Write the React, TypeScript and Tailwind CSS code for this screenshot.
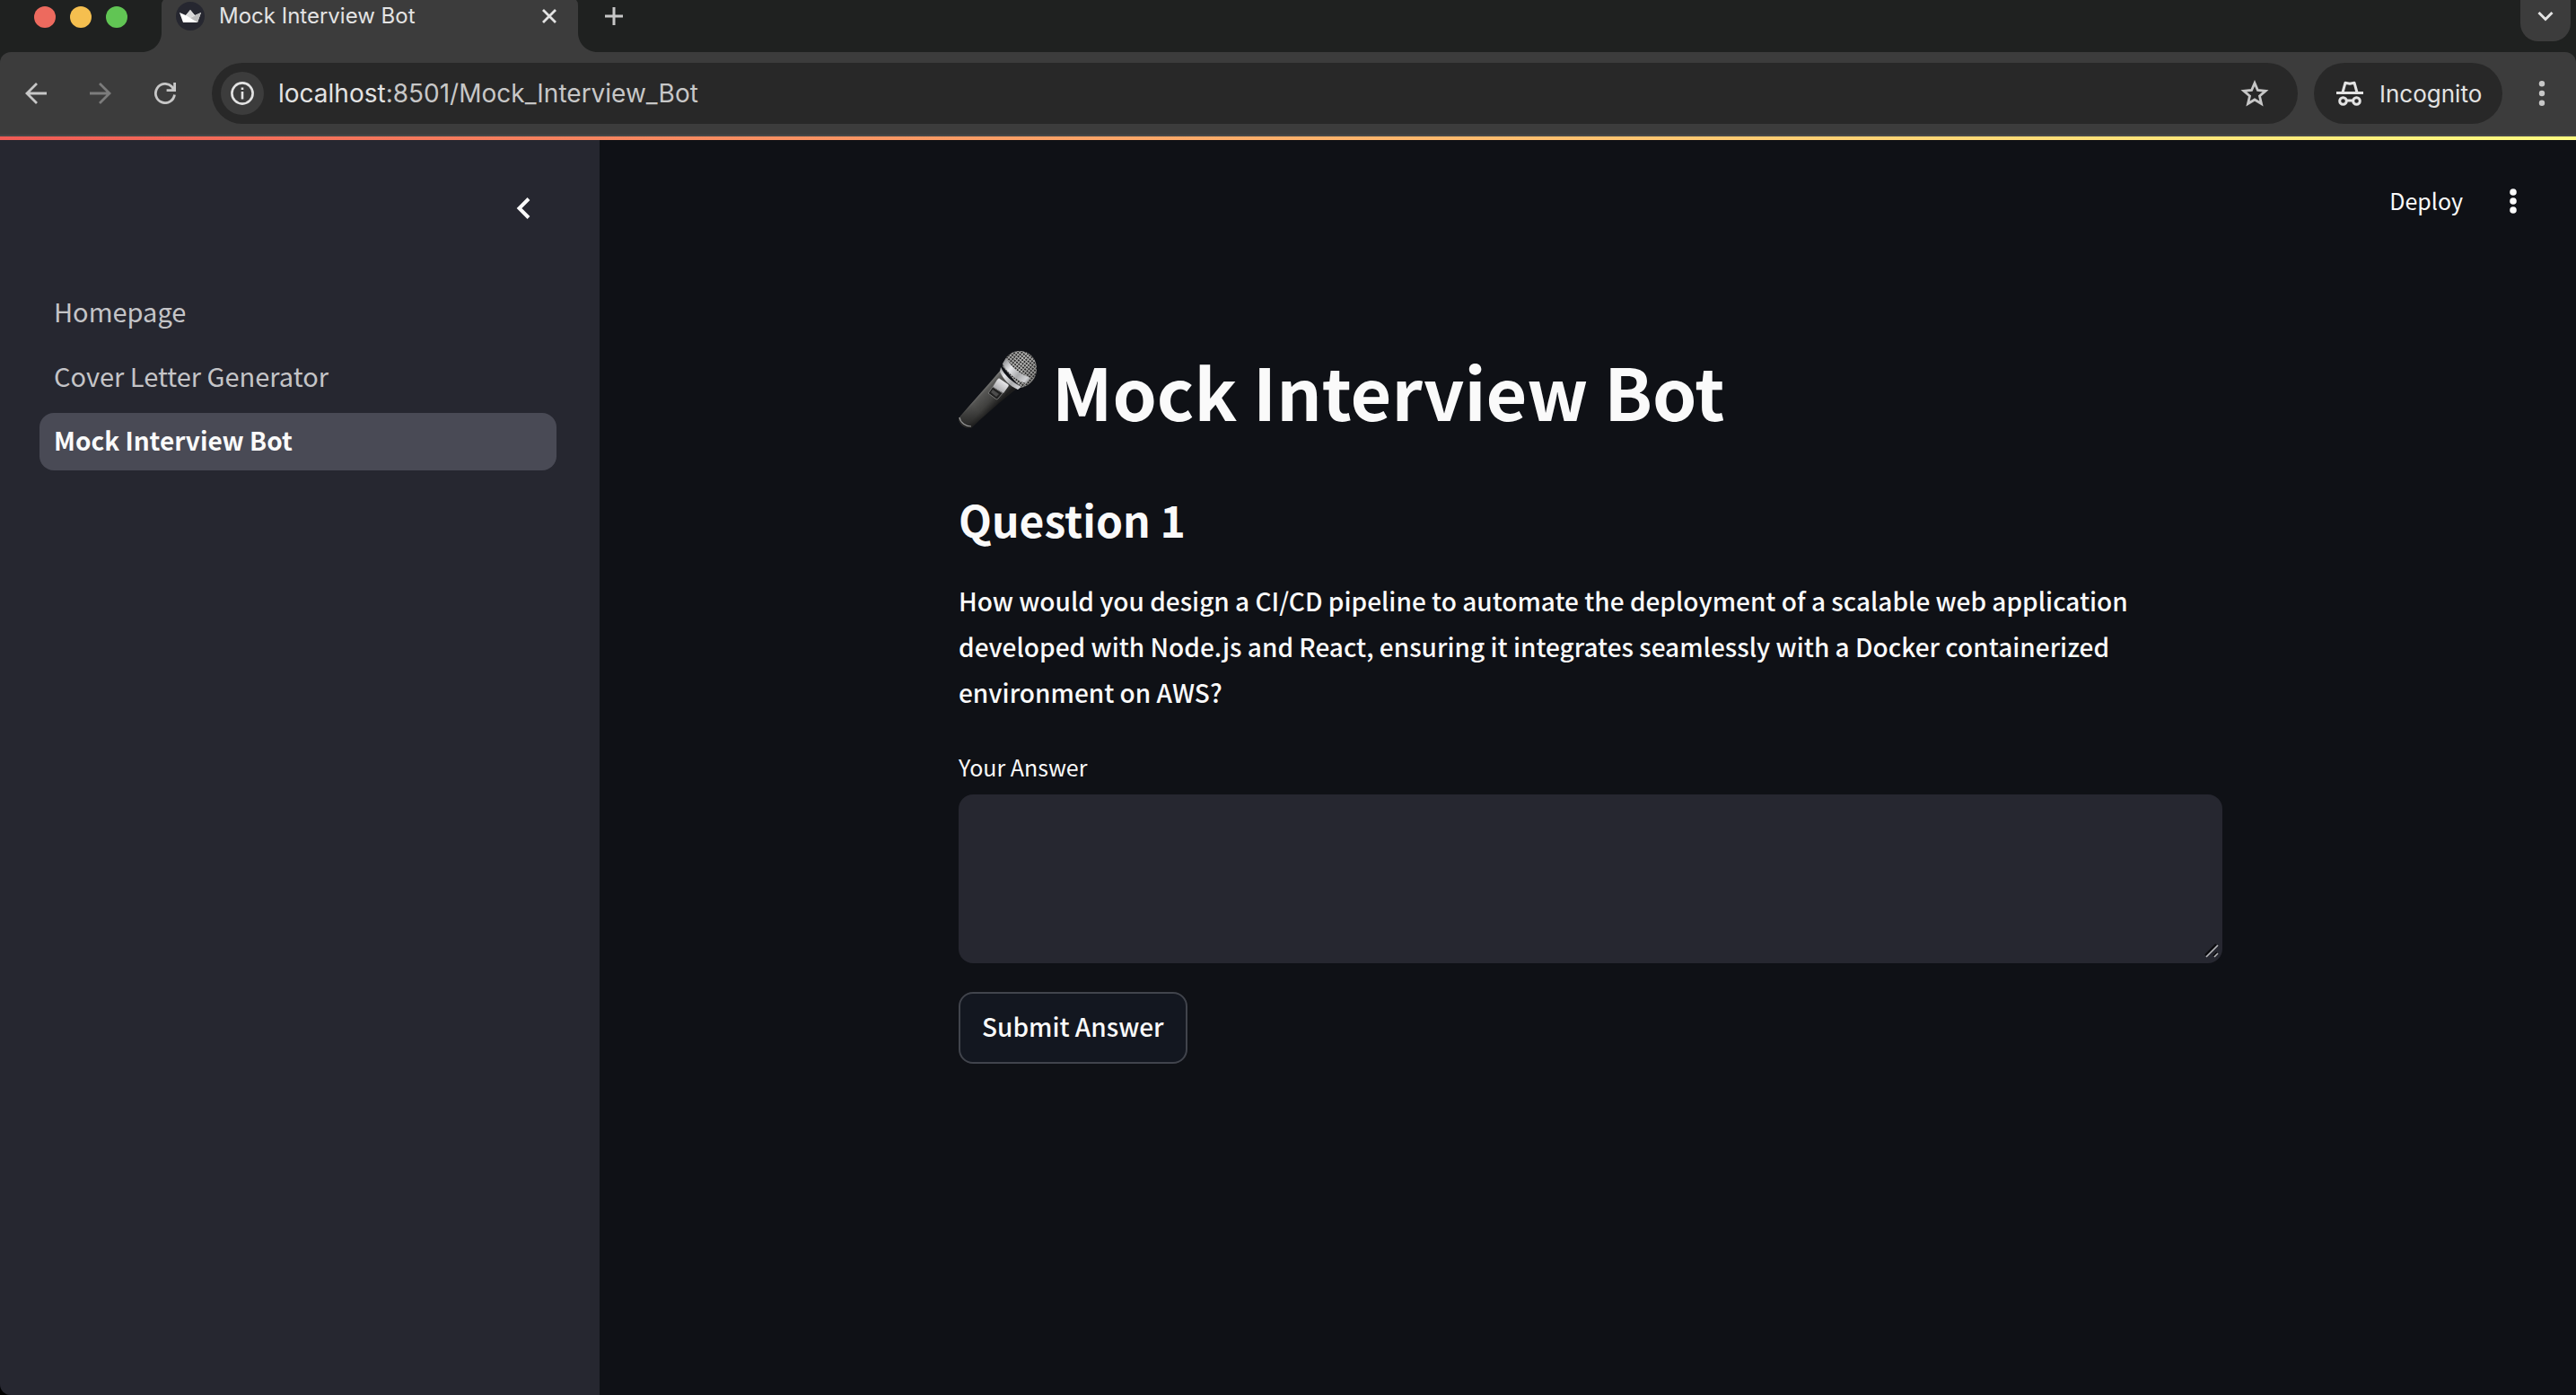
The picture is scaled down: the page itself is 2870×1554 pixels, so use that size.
import React from 'react';

const CHROME = "font-['Inter','Roboto',sans-serif]";

function TabFlare({ flip = false }: { flip?: boolean }) {
  return (
    <svg viewBox="0 0 24 58" className={flip ? 'h-[58px] w-6 -scale-x-100 fill-[#3c3c3c]' : 'h-[58px] w-6 fill-[#3c3c3c]'} aria-hidden="true">
      <path d="M24 0v58H0C13 58 22 48 22 36V6q0-4 2-6z" />
    </svg>
  );
}

function Microphone() {
  return (
    <svg viewBox="0 0 88 88" className="h-[88px] w-[88px] shrink-0" role="img" aria-label="microphone">
      <defs>
        <linearGradient id="body" x1="22" y1="46" x2="40" y2="63" gradientUnits="userSpaceOnUse">
          <stop offset="0" stopColor="#8c8c8a" />
          <stop offset="0.2" stopColor="#5c5c5a" />
          <stop offset="0.65" stopColor="#454543" />
          <stop offset="1" stopColor="#1e1e1e" />
        </linearGradient>
        <linearGradient id="fade" x1="60" y1="30" x2="6" y2="82" gradientUnits="userSpaceOnUse">
          <stop offset="0" stopColor="#000000" stopOpacity="0" />
          <stop offset="0.7" stopColor="#000000" stopOpacity="0.1" />
          <stop offset="1" stopColor="#000000" stopOpacity="0.45" />
        </linearGradient>
        <linearGradient id="head" x1="48" y1="8" x2="86" y2="32" gradientUnits="userSpaceOnUse">
          <stop offset="0" stopColor="#9a9a9a" />
          <stop offset="0.5" stopColor="#c4c4c2" />
          <stop offset="1" stopColor="#8a8a88" />
        </linearGradient>
        <linearGradient id="band" x1="51" y1="10" x2="80" y2="34" gradientUnits="userSpaceOnUse">
          <stop offset="0" stopColor="#8f9092" />
          <stop offset="0.3" stopColor="#e6e7ea" />
          <stop offset="0.6" stopColor="#a9aaac" />
          <stop offset="0.85" stopColor="#d0d1d4" />
          <stop offset="1" stopColor="#808080" />
        </linearGradient>
        <linearGradient id="key" x1="52" y1="33" x2="42" y2="46" gradientUnits="userSpaceOnUse">
          <stop offset="0" stopColor="#f0f0f2" />
          <stop offset="1" stopColor="#9b9b9e" />
        </linearGradient>
        <pattern id="mesh" width="3" height="3" patternUnits="userSpaceOnUse" patternTransform="rotate(40)">
          <rect width="2" height="2" fill="#2c2c2c" />
        </pattern>
      </defs>
      <path d="M47 21C32 39 15 57 0 75c0 6 7 12 14 11 17-16 33-30 52-45z" fill="url(#body)" />
      <path d="M47 21C32 39 15 57 0 75c0 6 7 12 14 11 17-16 33-30 52-45z" fill="url(#fade)" />
      <path d="M1 74c1 6 7 10 13 10" fill="none" stroke="#9a9a9a" strokeWidth="1.200" />
      <path d="M49 17C51 6 59 0 68 0c11 0 19 9 19 20 0 10-7 19-18 21z" fill="url(#head)" />
      <path d="M49 17C51 6 59 0 68 0c11 0 19 9 19 20 0 10-7 19-18 21z" fill="url(#mesh)" />
      <path d="M53 8c6 10 14 17 27 22l-5 6C63 32 54 24 49 14z" fill="url(#band)" />
      <path d="M47 18c4 9 12 16 23 22l-4 3c-9-4-16-11-20-20z" fill="url(#band)" />
      <path d="m46 31 9 6c1 1 1 2 0 3l-5 7-12-7 5-8c1-1 2-2 3-1z" fill="url(#key)" />
      <path d="m38 40 11 7-5 6c-1 1-2 1-3 0l-8-6z" fill="#1f1f1f" stroke="#777777" />
      <path d="m38 43 7 5-3 3-6-5z" fill="#4c4c4c" />
    </svg>
  );
}

function BrowserChrome() {
  return (
    <header className={`${CHROME} bg-[#1f2120] text-[#e3e3e3]`}>
      <div className="flex h-[58px] items-start overflow-hidden">
        <div className="flex h-[38px] items-center gap-4 pl-[38px] pr-4">
          <span className="size-6 rounded-full bg-[#ed6a5e]" />
          <span className="size-6 rounded-full bg-[#f5bf4f]" />
          <span className="size-6 rounded-full bg-[#61c554]" />
        </div>
        <div className="flex h-full">
          <TabFlare />
          <div className="flex w-[460px] items-center bg-[#3c3c3c] pb-[22px] pl-3.5 pr-[18px]">
            <span className="mr-4 grid size-8 shrink-0 place-items-center rounded-full bg-[#262730]">
              <svg viewBox="0 0 24 14" className="h-3.5 w-6" aria-hidden="true">
                <path d="M0 3l7 3 5-6 5 6 7-3-4 11H4z" fill="#ffffff" />
                <path d="M12 0l5 6-5 3-5-3z" fill="#d8d8d8" />
                <path d="M24 3l-4 11-8-5z" fill="#bdbdbd" />
              </svg>
            </span>
            <span className="grow text-2xl">Mock Interview Bot</span>
            <button type="button" aria-label="Close tab" className="grid size-6 place-items-center">
              <svg viewBox="0 0 18 18" className="size-[18px]" fill="none" stroke="currentColor" strokeWidth="2.800"><path d="M2 2l14 14M16 2 2 16" /></svg>
            </button>
          </div>
          <TabFlare flip />
        </div>
        <button type="button" aria-label="New tab" className="ml-1.5 grid h-9 w-6 place-items-center text-[#c7c7c7]">
          <svg viewBox="0 0 20 20" className="size-5" fill="none" stroke="currentColor" strokeWidth="3"><path d="M10 0v20M0 10h20" /></svg>
        </button>
        <button type="button" aria-label="Search tabs" className="ml-auto mr-1.5 grid h-[46px] w-14 place-items-center rounded-b-[20px] bg-[#3c3c3c] pb-2.5">
          <svg viewBox="0 0 18 12" className="h-3 w-[18px]" fill="none" stroke="currentColor" strokeWidth="3"><path d="M1.500 2 9 9.500 16.500 2" /></svg>
        </button>
      </div>
      <div className="flex h-[94px] items-center rounded-t-xl border-b-2 border-[#474747] bg-[#3c3c3c] text-[#c7c7c7]">
        <button type="button" aria-label="Back" className="ml-7 grid h-8 w-6 place-items-center">
          <svg viewBox="0 0 24 24" className="size-6" fill="none" stroke="currentColor" strokeWidth="2.800"><path d="M24 12H2M13 1 2 12l11 11" /></svg>
        </button>
        <button type="button" aria-label="Forward" className="ml-12 grid h-8 w-6 place-items-center text-[#7c7c7c]">
          <svg viewBox="0 0 24 24" className="size-6" fill="none" stroke="currentColor" strokeWidth="2.800"><path d="M0 12h22M11 1l11 11-11 11" /></svg>
        </button>
        <button type="button" aria-label="Reload" className="ml-12 grid h-8 w-6 place-items-center">
          <svg viewBox="0 0 24 24" className="size-6" fill="none" stroke="currentColor" strokeWidth="2.800"><path d="M22.500 13.500A10.600 10.600 0 1 1 19.500 4.500l2 3.500M22.600 0v8.600h-9" /></svg>
        </button>
        <div className="ml-10 flex h-[68px] min-w-0 grow items-center rounded-full bg-[#282828] pl-2.5 pr-8">
          <span className="grid size-12 shrink-0 place-items-center rounded-full bg-[#3c3c3c] text-[#e3e3e3]">
            <svg viewBox="0 0 26 26" className="size-[26px]" fill="none" stroke="currentColor" strokeWidth="2.600"><circle cx="13" cy="13" r="11.600" /><path d="M13 11v8.500M13 6.500v2.600" /></svg>
          </span>
          <div className="ml-4 grow text-[28px] text-[#c7c7c7]"><span className="text-[#e3e3e3]">localhost</span>:8501/Mock_Interview_Bot</div>
          <button type="button" aria-label="Bookmark this page">
            <svg viewBox="0 0 32 32" className="size-8" fill="none" stroke="currentColor" strokeWidth="2.800"><path d="M16 4.500l3.400 8 8.700.8-6.600 5.700 2 8.500-7.500-4.500-7.500 4.500 2-8.500-6.600-5.700 8.700-.8z" /></svg>
          </button>
        </div>
        <div className="ml-[18px] flex h-[68px] w-[210px] shrink-0 items-center gap-[18px] rounded-full bg-[#282828] pl-[25px] text-[#e3e3e3]">
          <svg viewBox="0 0 30 28" className="h-7 w-[30px]" fill="none" stroke="currentColor" strokeWidth="3" aria-hidden="true">
            <path d="M0 13.500h30" />
            <path d="M7 13 10 2.200l5 1 5-1L23 13" strokeLinejoin="round" />
            <circle cx="7.500" cy="22.500" r="3.800" /><circle cx="22.500" cy="22.500" r="3.800" /><path d="M11 22h8" />
          </svg>
          <span className="text-[26px]">Incognito</span>
        </div>
        <button type="button" aria-label="Browser menu" className="ml-[30px] mr-6 grid w-7 place-items-center">
          <svg viewBox="0 0 8 28" className="h-7 w-2" fill="currentColor"><circle cx="4" cy="3.200" r="3.200" /><circle cx="4" cy="14" r="3.200" /><circle cx="4" cy="24.800" r="3.200" /></svg>
        </button>
      </div>
    </header>
  );
}

const PAGES = ['Homepage', 'Cover Letter Generator'];

export default function App() {
  return (
    <div className="bg-black">
      <div className="flex min-h-screen flex-col overflow-hidden rounded-bl-xl bg-[#0f1116] font-['Noto_Sans_CJK_JP',sans-serif] text-[#fafafa]">
        <BrowserChrome />
        <div className="h-1 bg-linear-to-r from-[#f05b55] to-[#fffd80]" />
        <div className="flex grow">
          <aside className="w-[668px] shrink-0 bg-[#262730]">
            <div className="flex justify-end pr-[69px] pt-[60px]">
              <button type="button" aria-label="Collapse sidebar" className="grid size-8 place-items-center">
                <svg viewBox="0 0 16 24" className="h-6 w-4" fill="none" stroke="currentColor" strokeWidth="4"><path d="M14 1.500 3.500 12 14 22.500" /></svg>
              </button>
            </div>
            <nav className="mt-[68px] flex flex-col gap-2 pl-11 pr-12 leading-8">
              {PAGES.map((p) => (
                <a key={p} href="#" className="rounded-2xl px-4 pb-[18px] pt-3.5 text-[29px] text-[#c4c4c7]">{p}</a>
              ))}
              <a href="#" aria-current="page" className="rounded-2xl bg-[#494a55] px-4 pb-[18px] pt-3.5 text-[28px] font-bold">Mock Interview Bot</a>
            </nav>
          </aside>
          <main className="grow">
            <div className="flex h-[136px] items-center justify-end gap-12 pr-[62px]">
              <button type="button" className="text-[25px]">Deploy</button>
              <button type="button" aria-label="Main menu" className="grid w-4 place-items-center">
                <svg viewBox="0 0 8 28" className="h-7 w-2 overflow-visible" fill="currentColor"><circle cx="4" cy="4" r="3.800" /><circle cx="4" cy="14" r="3.800" /><circle cx="4" cy="24" r="3.800" /></svg>
              </button>
            </div>
            <div className="pl-1.5">
              <div className="mx-auto max-w-[1408px]">
                <h1 className="mt-[90px] flex items-center gap-4 text-[79px] leading-[106px] font-bold"><Microphone />Mock Interview Bot</h1>
                <h2 className="mt-14 text-[48px] leading-[68px] font-bold">Question 1</h2>
                <p className="mt-8 text-[28px] leading-[51px] font-medium">How would you design a CI/CD pipeline to automate the deployment of a scalable web application developed with Node.js and React, ensuring it integrates seamlessly with a Docker containerized environment on AWS?</p>
                <label htmlFor="answer" className="mt-9 block text-[25px] leading-[42px]">Your Answer</label>
                <div className="relative mt-2.5">
                  <textarea id="answer" className="block h-[188px] w-full resize-none rounded-2xl bg-[#262730] p-8 text-[28px] outline-none" />
                  <svg viewBox="0 0 18 18" className="pointer-events-none absolute right-0.5 bottom-1 size-[18px]" fill="none" aria-hidden="true">
                    <path d="M1 13 13 1M10 14l4-4" stroke="#0b0b0e" strokeWidth="2" />
                    <path d="M2 15 15 2M11 15l4-4" stroke="#b5b5b8" strokeWidth="1.600" />
                  </svg>
                </div>
                <button type="button" className="mt-8 rounded-2xl border-2 border-[#41444c] bg-[#131720] px-6 pb-[18px] pt-3.5 text-[28px] leading-[44px] font-medium">Submit Answer</button>
              </div>
            </div>
          </main>
        </div>
      </div>
    </div>
  );
}
